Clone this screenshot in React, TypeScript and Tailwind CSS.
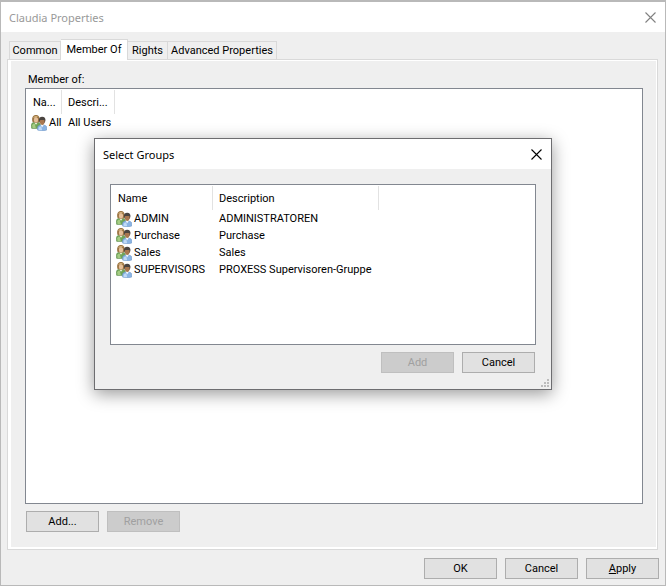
import React from 'react';
import clsx from 'clsx';

interface Group {
  name: string;
  description: string;
}

const memberOf: Group[] = [{ name: 'All', description: 'All Users' }];

const groups: Group[] = [
  { name: 'ADMIN', description: 'ADMINISTRATOREN' },
  { name: 'Purchase', description: 'Purchase' },
  { name: 'Sales', description: 'Sales' },
  { name: 'SUPERVISORS', description: 'PROXESS Supervisoren-Gruppe' },
];

const tabs = [
  { title: 'Common', width: 'w-[52px]' },
  { title: 'Member Of', width: 'w-[67px]' },
  { title: 'Rights', width: 'w-10' },
  { title: 'Advanced Properties', width: 'w-[109px]' },
];

function UsersIcon() {
  return (
    <svg className="w-4 h-4 flex-shrink-0" viewBox="0 0 16 16" aria-hidden="true">
      <path d="M0.3 12.8V10.2C0.3 8.2 1.6 7.6 3 7.2H7C8.8 7.7 9.6 8.6 9.6 10.6V13.5H1.2C0.6 13.5 0.3 13.2 0.3 12.8Z" fill="#6fa457" stroke="#4d803d" strokeWidth="0.4" />
      <path d="M1.2 10.2C1.8 9 2.8 8.6 3.8 8.8L4.8 13H1.6Z" fill="#a5cc83" />
      <path d="M3.2 7.3L5 9.8L6.8 7.3Z" fill="#eef3e0" />
      <path d="M1.3 6.6C0.5 2.6 2 0.1 5 0.1C8 0.1 9 2.4 8.5 6.4C7.8 8 2.2 8.2 1.3 6.6Z" fill="#9c7544" />
      <path d="M2.2 2.7C2.9 1 5.1 0.6 6.9 1.5C5.9 2.4 4 2.9 2.2 2.7Z" fill="#cfae78" />
      <ellipse cx="5" cy="4.9" rx="2.1" ry="2.7" fill="#e6c09a" />
      <path d="M6.4 14.9V12.9C6.4 11.2 7.8 10.5 9.2 10.1H13.2C15 10.5 15.8 11.4 15.8 13.1V14.9C14.8 15.9 7.4 15.9 6.4 14.9Z" fill="#8ab4e4" stroke="#5c84b8" strokeWidth="0.4" />
      <path d="M7.6 13C8.1 11.8 9.3 11.3 10.3 11.5L11.2 15.2H7.6Z" fill="#c0daf6" />
      <path d="M9.5 9.8L11.2 12.2L12.9 9.8Z" fill="#f2f7fd" />
      <path d="M7.9 5.8C7.6 3.4 8.9 1.8 11.2 1.8C13.5 1.8 14.7 3.4 14.4 5.8L13.7 7.8H8.8Z" fill="#4a4440" />
      <path d="M8.8 5.3C9.9 4.9 12 4.7 13.6 5.2C13.9 8 12.9 10 11.2 10C9.5 10 8.6 8.1 8.8 5.3Z" fill="#a9774f" />
    </svg>
  );
}

function CloseButton({ className }: { className: string }) {
  return (
    <button type="button" aria-label="Close" className={className}>
      <svg className="w-[11px] h-[11px]" viewBox="0 0 11 11" aria-hidden="true">
        <path d="M0.5 0.5L10.5 10.5M10.5 0.5L0.5 10.5" stroke="currentColor" strokeWidth="1.1" />
      </svg>
    </button>
  );
}

interface PushButtonProps {
  children: React.ReactNode;
  disabled?: boolean;
}

function PushButton({ children, disabled }: PushButtonProps) {
  return (
    <button
      type="button"
      disabled={disabled}
      className={clsx(
        'w-[73px] h-[21px] border text-center',
        disabled ? 'bg-[#cccccc] border-[#bfbfbf] text-[#a0a0a0]' : 'bg-[#e1e1e1] border-[#adadad]'
      )}
    >
      {children}
    </button>
  );
}

interface GroupListProps {
  label: string;
  rows: Group[];
  headers: [string, string];
  widths: [string, string];
}

function GroupList({ label, rows, headers, widths }: GroupListProps) {
  return (
    <table aria-label={label} className="mt-px table-fixed border-separate border-spacing-0 text-left whitespace-nowrap">
      <thead>
        <tr>
          <th className={clsx('h-6 p-0 pl-[7px] border-r border-[#e2e2e2] font-normal', widths[0])}>{headers[0]}</th>
          <th className={clsx('h-6 p-0 pl-[6px] border-r border-[#e2e2e2] font-normal', widths[1])}>{headers[1]}</th>
        </tr>
      </thead>
      <tbody>
        {rows.map(row => (
          <tr key={row.name}>
            <td className="h-[17px] p-0 pl-[5px]">
              <div className="flex items-center gap-[2px] h-[17px]">
                <UsersIcon />
                <span>{row.name}</span>
              </div>
            </td>
            <td className="h-[17px] p-0 pl-[6px]">{row.description}</td>
          </tr>
        ))}
      </tbody>
    </table>
  );
}

function SelectGroupsDialog() {
  return (
    <div
      role="dialog"
      aria-label="Select Groups"
      className="absolute left-[93px] top-[136px] w-[458px] border border-[#6d6d70] bg-[#efefef] shadow-[0_4px_16px_rgba(0,0,0,0.4)]"
    >
      <div className="flex items-center justify-between h-[30px] pl-2 pr-[9px] bg-white">
        <h2 className="font-['Noto_Sans',sans-serif] text-[11px]">Select Groups</h2>
        <CloseButton className="text-black" />
      </div>
      <div className="px-[15px] pt-[15px] pb-4">
        <div className="h-[161px] border border-[#828790] bg-white">
          <GroupList label="Groups" rows={groups} headers={['Name', 'Description']} widths={['w-[102px]', 'w-[166px]']} />
        </div>
        <div className="flex justify-end gap-2 mt-[7px] pr-px">
          <PushButton disabled>Add</PushButton>
          <PushButton>Cancel</PushButton>
        </div>
      </div>
      <svg className="absolute right-[2px] bottom-[2px] w-2 h-2" viewBox="0 0 8 8" fill="#bcbcbc" aria-hidden="true">
        <path d="M6 0h2v2h-2zM3 3h2v2h-2zM6 3h2v2h-2zM0 6h2v2h-2zM3 6h2v2h-2zM6 6h2v2h-2z" />
      </svg>
    </div>
  );
}

export default function App() {
  return (
    <div className="relative flex flex-col min-h-screen border border-t-2 border-[#b9b9b9] bg-[#efefef] text-black text-[11px] leading-[17px] font-[Roboto,Arial,sans-serif]">
      <header className="flex items-center justify-between h-[30px] pl-2 pr-[9px] bg-white">
        <h1 className="font-['Noto_Sans',sans-serif] text-[11px] text-[#999999]">Claudia Properties</h1>
        <CloseButton className="text-[#808080]" />
      </header>

      <main className="flex-1 flex flex-col pt-[7px] pl-[6px] pr-[7px]">
        <div role="tablist" className="flex items-end h-5 pl-[2px]">
          {tabs.map(tab => (
            <button
              key={tab.title}
              type="button"
              role="tab"
              aria-selected={tab.title === 'Member Of'}
              className={clsx(
                'border-[#d9d9d9] border-t border-r whitespace-nowrap',
                tab.width,
                tab.title === 'Member Of' ? 'relative -mb-px h-[21px] pb-[2px] bg-white' : 'h-[18px]',
                tab.title === 'Common' && 'border-l'
              )}
            >
              {tab.title}
            </button>
          ))}
        </div>

        <div className="flex-1 flex flex-col border border-[#d9d9d9] bg-white pt-px pl-[3px] pr-px pb-[2px]">
          <div className="flex-1 flex flex-col bg-[#efefef] pt-[10px] pl-[14px] pr-[13px] pb-[15px]">
            <p className="h-[17px] pl-[3px]">Member of:</p>
            <div className="flex-1 border border-[#828790] bg-white">
              <GroupList label="Member of" rows={memberOf} headers={['Na...', 'Descri...']} widths={['w-[36px]', 'w-[53px]']} />
            </div>
            <div className="flex gap-2 mt-[7px] pl-px">
              <PushButton>Add...</PushButton>
              <PushButton disabled>Remove</PushButton>
            </div>
          </div>
        </div>
      </main>

      <footer className="flex justify-end gap-2 pt-2 pr-[6px] pb-[6px]">
        <PushButton>OK</PushButton>
        <PushButton>Cancel</PushButton>
        <PushButton>
          <span className="underline">A</span>pply
        </PushButton>
      </footer>

      <SelectGroupsDialog />
    </div>
  );
}
